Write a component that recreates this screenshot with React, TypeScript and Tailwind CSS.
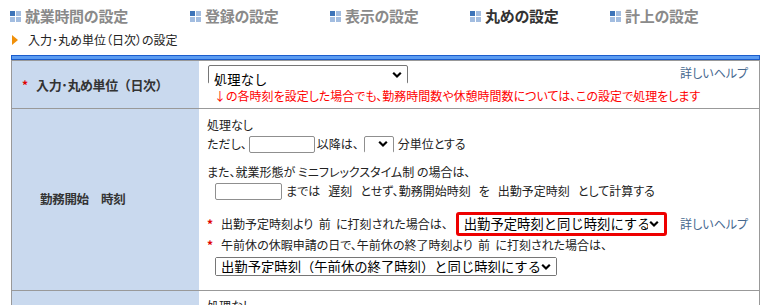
import React from 'react';

const jp = { fontFamily: '"Noto Sans CJK JP", "Noto Sans", sans-serif' };

function TabIcon() {
    return (
        <span className="grid grid-cols-[5px_5px] grid-rows-[5px_5px] gap-[1px] mr-[4px] shrink-0">
            <span className="bg-[#3d74b9]" />
            <span className="bg-[#a3bde0]" />
            <span className="bg-[#a3bde0]" />
            <span className="bg-[#a3bde0]" />
        </span>
    );
}

function Chevron() {
    return (
        <svg width="10" height="7" viewBox="0 0 10 7" className="pointer-events-none absolute right-[5px] top-1/2 -translate-y-1/2">
            <path d="M1.2 1.3 L5 5 L8.8 1.3" fill="none" stroke="#000" strokeWidth="2.2" />
        </svg>
    );
}

function Sel({ value, className }: { value: string; className: string }) {
    return (
        <span className={`relative inline-block shrink-0 ${className}`}>
            <select
                defaultValue={value}
                className="appearance-none w-full h-full bg-white text-[13.33px] text-black pl-[5px] pr-[16px] leading-none outline-none"
                style={jp}
            >
                <option>{value}</option>
            </select>
            <Chevron />
        </span>
    );
}

function Box({ className }: { className: string }) {
    return <input type="text" className={`shrink-0 bg-white border border-[#8f8f8f] rounded-[2px] ${className}`} />;
}

function Help() {
    return <a className="text-[12px] text-[#46688f] whitespace-nowrap">詳しいヘルプ</a>;
}

function Star() {
    return <span className="text-[#e00000] text-[12px] font-bold mr-[8px]">*</span>;
}

const tabs = [
    { label: '就業時間の設定', w: 'w-[180px]' },
    { label: '登録の設定', w: 'w-[140px]' },
    { label: '表示の設定', w: 'w-[140px]' },
    { label: '丸めの設定', w: 'w-[140px]', active: true },
    { label: '計上の設定', w: 'w-[140px]' },
];

export default function App() {
    return (
        <div className="w-[771px] h-[305px] overflow-hidden bg-white text-[#222]" style={jp}>
            <div className="flex pl-[10px] pt-[6px] h-[26px]">
                {tabs.map((t) => (
                    <div key={t.label} className={`flex items-center ${t.w}`}>
                        <TabIcon />
                        <span
                            className={`text-[15px] font-bold tracking-[-0.3px] ${t.active ? 'text-[#333]' : 'text-[#8a8a8a]'}`}
                        >
                            {t.label}
                        </span>
                    </div>
                ))}
            </div>

            <div className="flex items-center pl-[12px] h-[16px] mt-[6px]">
                <svg width="6" height="10" viewBox="0 0 6 10" className="mr-[10px]">
                    <path d="M0 0 L6 5 L0 10 Z" fill="#f0900a" />
                </svg>
                <span className="text-[12px] text-[#222] [font-feature-settings:'palt']">入力･丸め単位（日次）の設定</span>
            </div>

            <div className="ml-[11px] w-[749px] mt-[7px] h-[5px] border border-[#1a5ccc] bg-[#5b9cf2]" />

            <div className="ml-[11px] w-[749px] border-x border-[#999] [font-feature-settings:'palt']">
                <div className="grid grid-cols-[187px_1fr] border-t border-[#999] h-[48px]">
                    <div className="bg-[#c9d9ee] flex items-center pl-[10px] [font-feature-settings:normal]">
                        <Star />
                        <span className="text-[13px] font-bold text-[#333] tracking-[-0.4px]">入力･丸め単位（日次）</span>
                    </div>
                    <div className="pl-[9px] pr-[11px] pt-[4px]">
                        <div className="flex justify-between items-start">
                            <Sel value="処理なし" className="w-[200px] h-[19px] border border-[#767676] rounded-[2px] [font-feature-settings:normal]" />
                            <div className="h-[16px] flex items-center">
                                <Help />
                            </div>
                        </div>
                        <div className="h-[16px] mt-[4px] pl-[6px] flex items-center text-[12px] text-[#ff0000] whitespace-nowrap">
                            ↓の各時刻を設定した場合でも、勤務時間数や休憩時間数については、この設定で処理をします
                        </div>
                    </div>
                </div>

                <div className="grid grid-cols-[187px_1fr] border-t border-[#999] h-[182px]">
                    <div className="bg-[#c9d9ee] flex items-center pl-[28px] [font-feature-settings:normal]">
                        <span className="text-[12.5px] font-bold text-[#333] tracking-[-0.3px]">勤務開始　時刻</span>
                    </div>
                    <div className="pl-[8px] pr-[11px] pt-[8px] text-[12px] whitespace-nowrap">
                        <div className="h-[16px] flex items-center">処理なし</div>
                        <div className="h-[20px] mt-[1px] flex items-center">
                            <span>ただし、</span>
                            <Box className="w-[66px] h-[17px] ml-[2px] mr-[2px]" />
                            <span>以降は、</span>
                            <Sel value="" className="w-[30px] h-[17px] border border-[#8f8f8f] rounded-[2px] ml-[5px] mr-[4px]" />
                            <span>分単位とする</span>
                        </div>
                        <div className="h-[16px] mt-[10px] flex items-center">
                            また、就業形態が ミニフレックスタイム制 の場合は、
                        </div>
                        <div className="h-[20px] mt-[1px] pl-[8px] flex items-center">
                            <Box className="w-[67px] h-[17px] mr-[4px]" />
                            <span>
                                までは&nbsp;&nbsp;&nbsp;遅刻&nbsp;&nbsp;&nbsp;とせず、勤務開始時刻&nbsp;&nbsp;&nbsp;を&nbsp;&nbsp;&nbsp;出勤予定時刻&nbsp;&nbsp;&nbsp;として計算する
                            </span>
                        </div>
                        <div className="h-[24px] mt-[11px] flex items-center">
                            <Star />
                            <span>出勤予定時刻より&nbsp;&nbsp;前&nbsp;&nbsp;に打刻された場合は、</span>
                            <Sel
                                value="出勤予定時刻と同じ時刻にする"
                                className="w-[211px] h-[24px] border-[3px] border-[#ee0000] rounded-[3px] ml-[8px] [font-feature-settings:normal]"
                            />
                            <span className="ml-auto">
                                <Help />
                            </span>
                        </div>
                        <div className="h-[16px] mt-[1px] flex items-center">
                            <Star />
                            <span>午前休の休暇申請の日で、午前休の終了時刻より&nbsp;&nbsp;前&nbsp;&nbsp;に打刻された場合は、</span>
                        </div>
                        <div className="h-[19px] mt-[4px] pl-[8px] flex items-center">
                            <Sel
                                value="出勤予定時刻（午前休の終了時刻）と同じ時刻にする"
                                className="w-[342px] h-[19px] border border-[#767676] rounded-[2px] [font-feature-settings:normal]"
                            />
                        </div>
                    </div>
                </div>

                <div className="grid grid-cols-[187px_1fr] border-t border-[#999] h-[40px]">
                    <div className="bg-[#c9d9ee]" />
                    <div className="pl-[8px] pt-[7px] text-[12px]">
                        <div className="h-[16px] flex items-center">処理なし</div>
                    </div>
                </div>
            </div>
        </div>
    );
}
